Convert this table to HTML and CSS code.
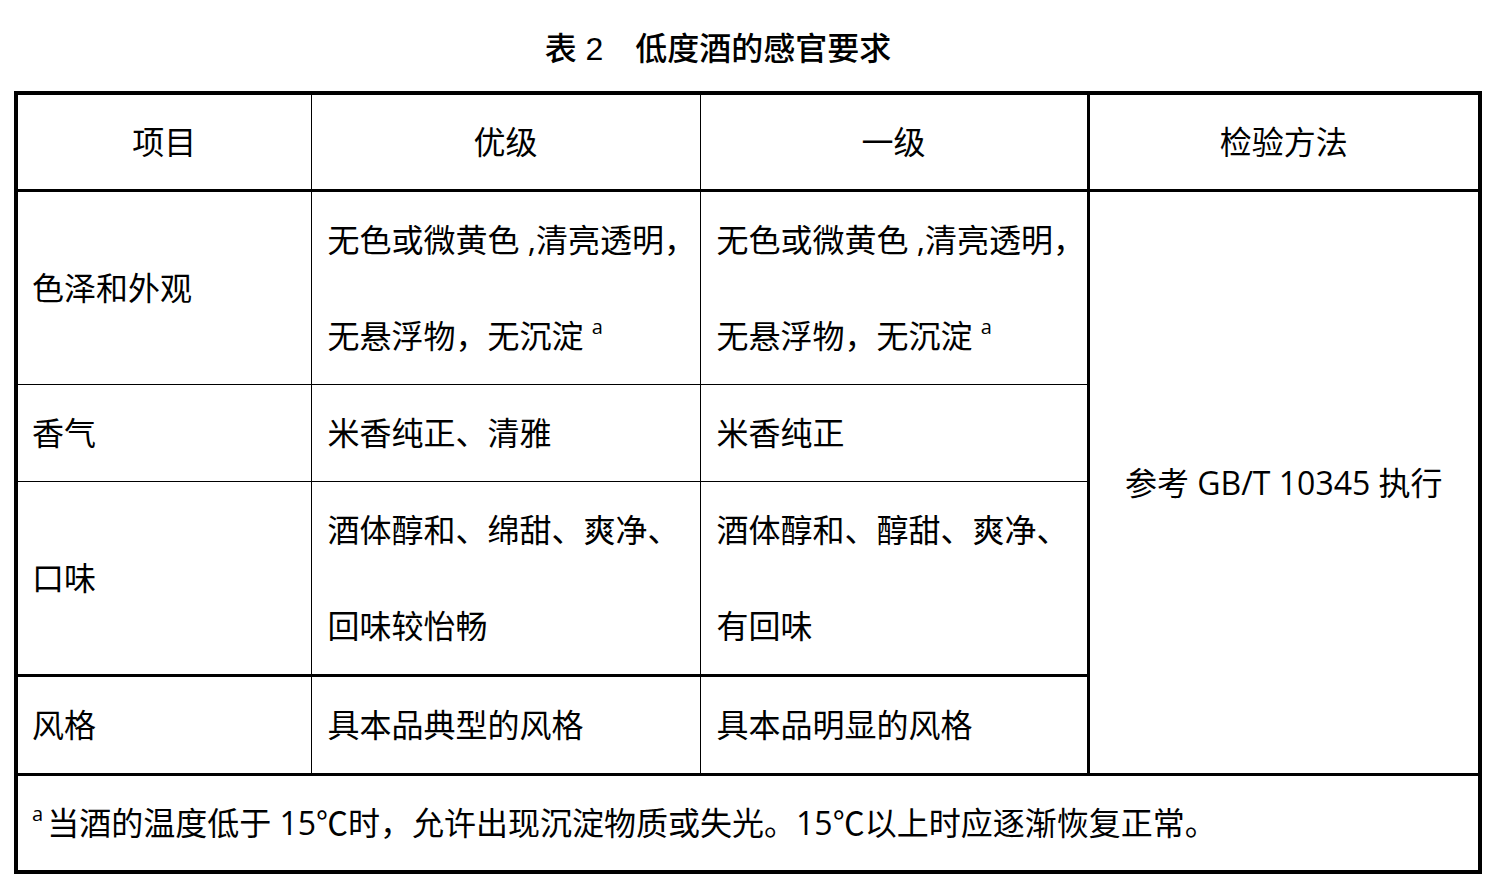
FILE: index.html
```html
<!DOCTYPE html>
<html lang="zh-CN">
<head>
<meta charset="utf-8">
<title>表 2 低度酒的感官要求</title>
<link rel="stylesheet" href="styles.css">
</head>
<body>
<h1 class="caption">表 2&emsp;低度酒的感官要求</h1>
<table class="spec">
  <colgroup>
    <col class="c1"><col class="c2"><col class="c3"><col class="c4">
  </colgroup>
  <thead>
    <tr class="head">
      <th>项目</th>
      <th>优级</th>
      <th>一级</th>
      <th class="method">检验方法</th>
    </tr>
  </thead>
  <tbody>
    <tr class="r-tall">
      <td>色泽和外观</td>
      <td class="nw grade">无色或微黄色 ,清亮透明，<br>无悬浮物，无沉淀 <sup>a</sup></td>
      <td class="nw grade">无色或微黄色 ,清亮透明，<br>无悬浮物，无沉淀 <sup>a</sup></td>
      <td class="method center" rowspan="4">参考 GB/T 10345 执行</td>
    </tr>
    <tr class="r-short">
      <td>香气</td>
      <td class="grade">米香纯正、清雅</td>
      <td class="grade">米香纯正</td>
    </tr>
    <tr class="r-tall r-thick">
      <td>口味</td>
      <td class="nw grade">酒体醇和、绵甜、爽净、<br>回味较怡畅</td>
      <td class="nw grade">酒体醇和、醇甜、爽净、<br>有回味</td>
    </tr>
    <tr class="r-short r-thick">
      <td>风格</td>
      <td class="grade">具本品典型的风格</td>
      <td class="grade">具本品明显的风格</td>
    </tr>
  </tbody>
  <tfoot>
    <tr class="foot">
      <td colspan="4"><sup class="fn">a</sup>当酒的温度低于 15℃时，允许出现沉淀物质或失光。15℃以上时应逐渐恢复正常。</td>
    </tr>
  </tfoot>
</table>
</body>
</html>
```

FILE: styles.css
```css
html, body {
  margin: 0;
  padding: 0;
  background: #fff;
}

body {
  font-family: "Open Sans", "Noto Sans CJK SC", sans-serif;
  color: #000;
}

.caption {
  margin: 0;
  padding: 30px 64px 0 0;
  height: 91px;
  box-sizing: border-box;
  font-family: "Liberation Sans", "Noto Sans CJK SC", sans-serif;
  font-size: 32px;
  line-height: 38px;
  font-weight: 500;
  text-align: center;
}

.spec {
  margin-left: 14px;
  width: 1464px;
  table-layout: fixed;
  border-collapse: collapse;
  border: 4px solid #000;
  font-size: 32px;
}

.c1 { width: 295px; }
.c2 { width: 389px; }
.c3 { width: 388px; }
.c4 { width: 392px; }

.spec th,
.spec td {
  border: 1px solid #000;
  padding: 0 0 0 14px;
  line-height: 96px;
  vertical-align: middle;
  text-align: left;
  font-weight: normal;
}

.spec td.grade {
  padding-left: 16px;
}

.spec th {
  text-align: center;
  padding: 0;
  height: 94px;
  line-height: 94px;
  border-bottom: 3px solid #000;
}

.spec .method {
  border-left: 3px solid #000;
}

.spec td.center {
  text-align: center;
  padding: 0;
}

.nw {
  white-space: nowrap;
  overflow: visible;
}

.r-short td {
  height: 96px;
}

.r-thick td {
  border-bottom: 3px solid #000;
}

.foot td {
  border-top: 3px solid #000;
  height: 94px;
  line-height: 94px;
}

sup {
  font-size: 20px;
  line-height: 0;
  vertical-align: 14px;
}

.fn {
  margin-right: 4px;
}
```
